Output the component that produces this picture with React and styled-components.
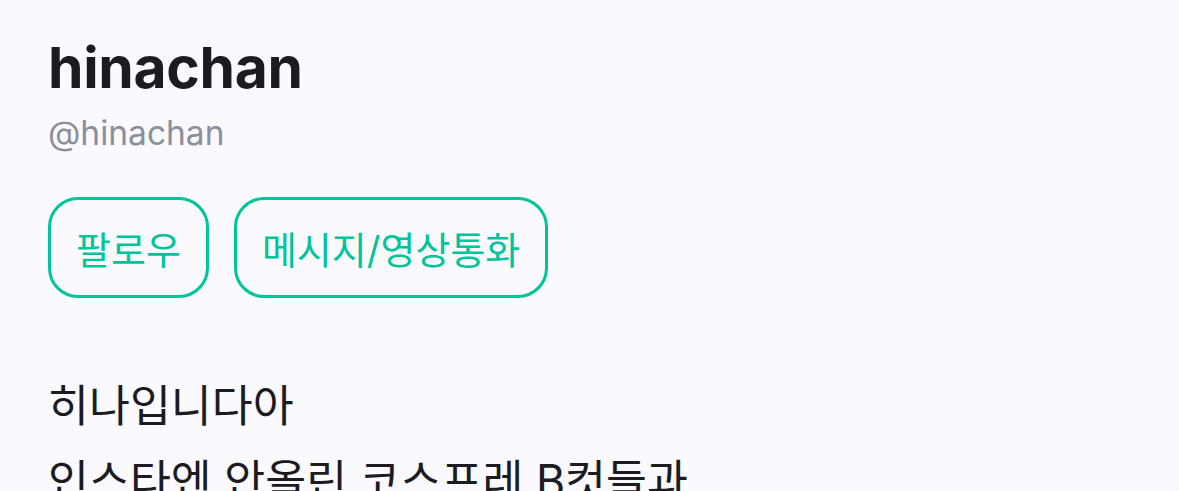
import React from "react";
import styled, { createGlobalStyle } from "styled-components";

const Global = createGlobalStyle`
  html, body { margin: 0; padding: 0; background: #f9f9fe; }
  body { font-family: Inter, "Noto Sans CJK KR", sans-serif; }
`;

const Page = styled.div`
  padding: 30px 48px 0;
  display: flex;
  flex-direction: column;
  min-height: 491px;
  box-sizing: border-box;
`;

const Name = styled.h1`
  margin: 0;
  font-size: 57px;
  font-weight: 700;
  line-height: 76px;
  color: #1b1b21;
  letter-spacing: -0.3px;
`;

const Handle = styled.div`
  font-size: 33.5px;
  line-height: 48px;
  color: #8a8f9b;
  margin-top: 3px;
`;

const Actions = styled.div`
  display: flex;
  gap: 25px;
  margin-top: 40px;
`;

const ActionButton = styled.button`
  height: 101px;
  box-sizing: border-box;
  padding: 0 25px;
  border: 3px solid #00c49a;
  border-radius: 30px;
  background: transparent;
  color: #00c49a;
  font-family: Inter, "Noto Sans CJK KR", sans-serif;
  font-size: 38px;
  display: flex;
  align-items: center;
  justify-content: center;
`;

const Bio = styled.p`
  margin: 71px 0 0;
  font-size: 44.5px;
  line-height: 75px;
  color: #1b1b21;
  white-space: pre-line;
`;

export default function App() {
  return (
    <>
      <Global />
      <Page>
        <Name>hinachan</Name>
        <Handle>@hinachan</Handle>
        <Actions>
          <ActionButton>팔로우</ActionButton>
          <ActionButton>메시지/영상통화</ActionButton>
        </Actions>
        <Bio>{"히나입니다아\n인스타엔 안올린 코스프레 B컷들과"}</Bio>
      </Page>
    </>
  );
}
